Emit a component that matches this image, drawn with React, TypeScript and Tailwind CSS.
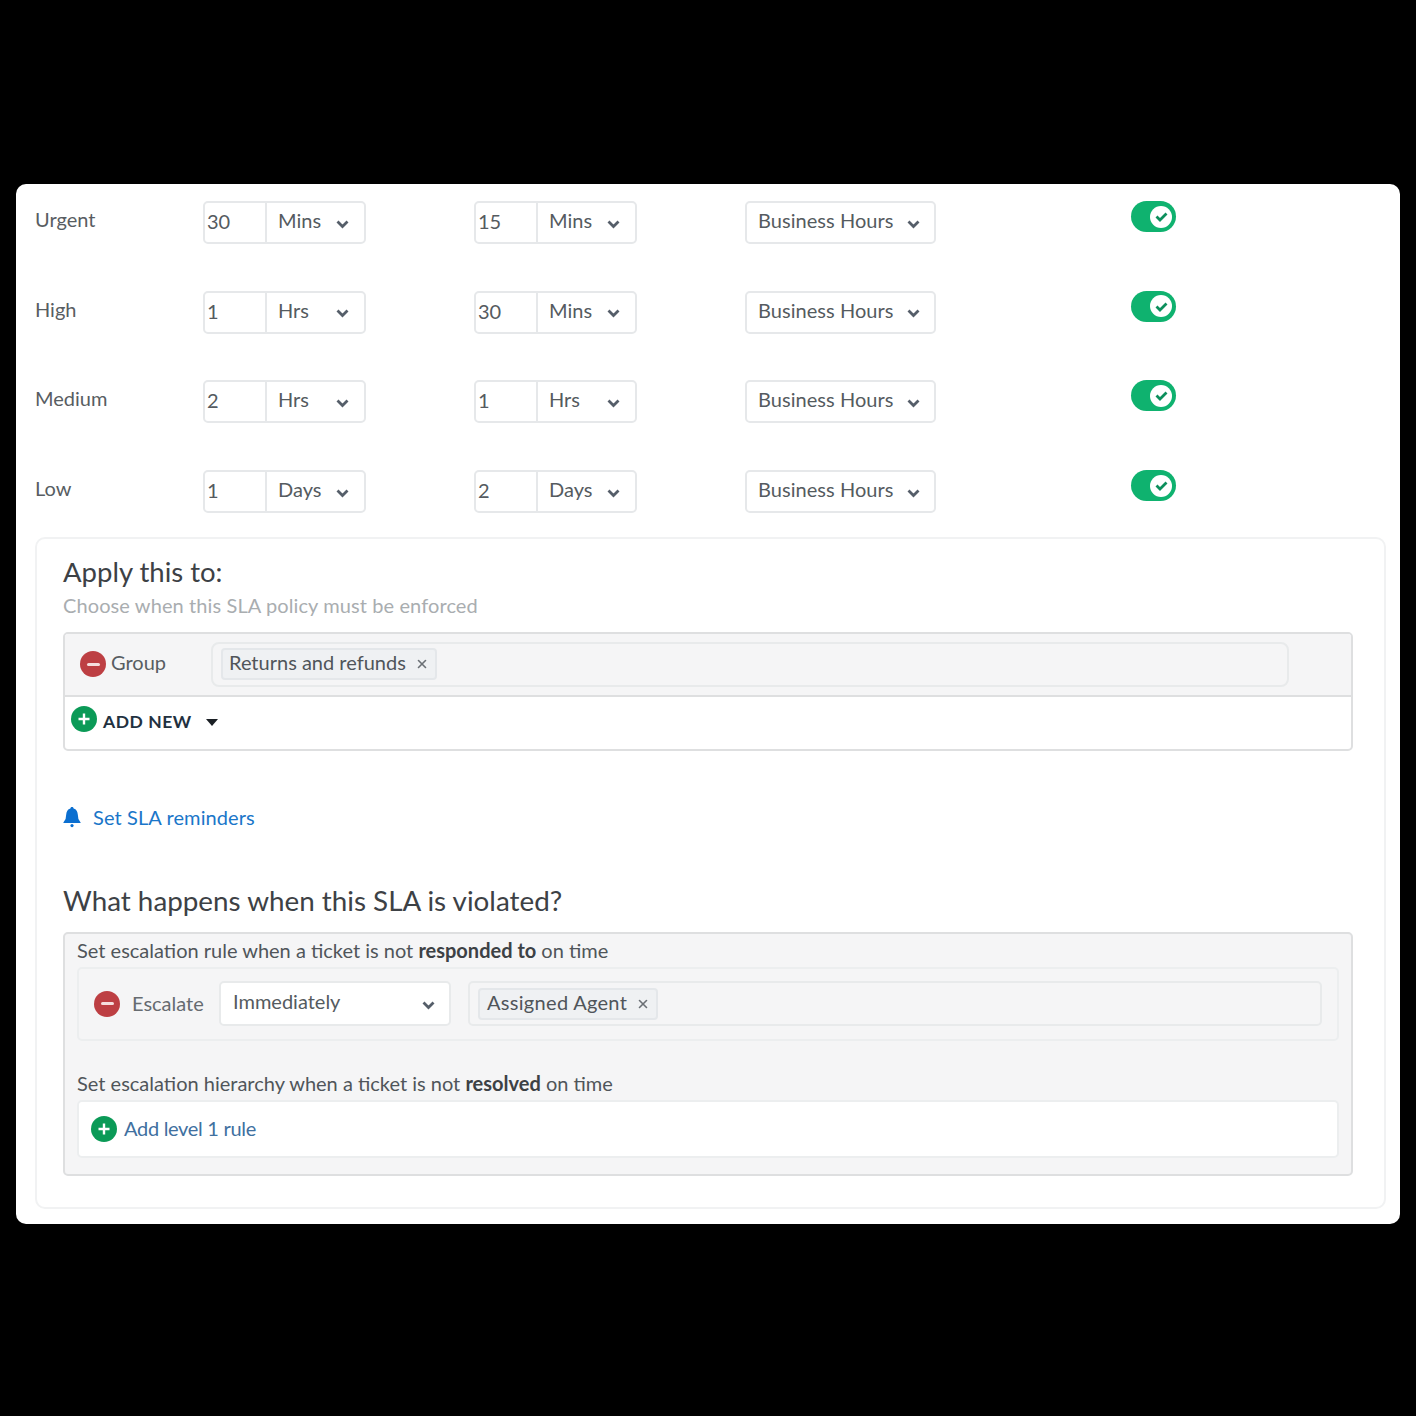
import { X } from 'lucide-react'

const rows = [
  { label: 'Urgent', a: '30', aUnit: 'Mins', b: '15', bUnit: 'Mins' },
  { label: 'High', a: '1', aUnit: 'Hrs', b: '30', bUnit: 'Mins' },
  { label: 'Medium', a: '2', aUnit: 'Hrs', b: '1', bUnit: 'Hrs' },
  { label: 'Low', a: '1', aUnit: 'Days', b: '2', bUnit: 'Days' },
]

function Chevron({ className }: { className?: string }) {
  return (
    <svg width="13" height="10" viewBox="0 0 13 10" className={className} fill="none">
      <path d="M1.5 2.5 L6.5 7.5 L11.5 2.5" stroke="#555e69" strokeWidth="2.8" />
    </svg>
  )
}

function TimeInput({ value, unit }: { value: string; unit: string }) {
  return (
    <div className="flex h-[43px] w-[162.5px] rounded-[5px] border-2 border-[#e6e8ea] bg-white text-[#555b60]">
      <div className="flex w-[62px] items-center border-r-2 border-[#e6e8ea] pb-[3px] pl-[2px]">{value}</div>
      <div className="flex flex-1 items-center justify-between pl-[11px] pr-[15px]">
        <span className="-mt-[5px]">{unit}</span>
        <Chevron className="mt-0.5" />
      </div>
    </div>
  )
}

function Toggle() {
  return (
    <div className="flex h-[31px] w-[45px] items-center justify-end rounded-full bg-[#0fb26f] pr-[4px]">
      <div className="flex h-[22px] w-[22px] items-center justify-center rounded-full bg-white">
        <svg width="13" height="11" viewBox="0 0 13 11" fill="none">
          <path d="M1.5 5.5 L5 9 L11.5 2.5" stroke="#0c8f5c" strokeWidth="2.8" />
        </svg>
      </div>
    </div>
  )
}

function Minus() {
  return (
    <div className="flex h-[26px] w-[26px] shrink-0 items-center justify-center rounded-full bg-[#bd3f43]">
      <div className="h-[3px] w-[13px] rounded-sm bg-[#f5dede]" />
    </div>
  )
}

function Plus() {
  return (
    <div className="flex h-[26px] w-[26px] shrink-0 items-center justify-center rounded-full bg-[#0b9a57]">
      <svg width="14" height="14" viewBox="0 0 14 14" fill="none">
        <path d="M7 1.5 V12.5 M1.5 7 H12.5" stroke="#ffffff" strokeWidth="2.4" />
      </svg>
    </div>
  )
}

function Tag({ text, wide }: { text: string; wide?: boolean }) {
  return (
    <div className="flex h-8 items-center gap-[9px] rounded border-2 border-[#e4e7ea] bg-[#eff1f3] pl-[6px] pr-[6px] text-[#50555a]">
      <span className={wide ? '-mt-[3px] pl-px tracking-[0.3px]' : '-mt-[4px]'}>{text}</span>
      <X size={14} strokeWidth={2.8} className="text-[#6b7075]" />
    </div>
  )
}

export default function App() {
  return (
    <div className="min-h-[1416px] bg-black px-4 pt-[184px] font-['Lato','Open_Sans',sans-serif] text-[20px] leading-6">
      <div className="h-[1040px] rounded-[10px] bg-white pl-[19px] pr-[14px] pt-[17px]">
        <div className="flex flex-col gap-[46.7px]">
          {rows.map((row) => (
            <div key={row.label} className="flex h-[43px] items-start">
              <div className="w-[168px] pt-[6px] text-[#585d62]">{row.label}</div>
              <TimeInput value={row.a} unit={row.aUnit} />
              <div className="ml-[108.5px]">
                <TimeInput value={row.b} unit={row.bUnit} />
              </div>
              <div className="ml-[108.5px] flex h-[43px] w-[191px] items-center justify-between rounded-[5px] border-2 border-[#e6e8ea] pl-[11px] pr-[14px] text-[#555b60]">
                <span className="-mt-[5px] tracking-[0.05px]">Business Hours</span>
                <Chevron className="mt-0.5" />
              </div>
              <div className="ml-[195px]">
                <Toggle />
              </div>
            </div>
          ))}
        </div>

        <div className="mt-[23.9px] h-[672px] rounded-[10px] border-2 border-[#f1f2f3] pl-[26px] pr-[31px] pt-[15px]">
          <h2 className="text-[27.5px] leading-9 text-[#3d4145]">Apply this to:</h2>
          <p className="mt-[3px] leading-6 tracking-[0.1px] text-[#a9adb0]">Choose when this SLA policy must be enforced</p>

          <div className="mt-[15px] h-[119px] overflow-hidden rounded-[5px] border-2 border-[#dedfe0]">
            <div className="flex h-[63px] items-center border-b-2 border-[#dedfe0] bg-[#f5f5f6] pl-[15px]">
              <Minus />
              <span className="-mt-[5px] ml-[5px] w-[100px] text-[#585d62]">Group</span>
              <div className="flex h-[45px] w-[1078px] items-center rounded-lg border-2 border-[#e8eaeb] pl-2">
                <Tag text="Returns and refunds" />
              </div>
            </div>
            <div className="flex items-center pl-[6px] pt-[7px]">
              <Plus />
              <span className="ml-[6px] mt-1.5 text-[17.5px] font-bold tracking-[0.55px] text-[#22313f]">ADD NEW</span>
              <svg width="12" height="7" viewBox="0 0 12 7" className="ml-[14px] mt-2">
                <path d="M0 0 H12 L6 7 Z" fill="#1a1f24" />
              </svg>
            </div>
          </div>

          <div className="mt-[55px] flex items-center">
            <svg width="18" height="22" viewBox="0 0 18 22" fill="#0b6fd0">
              <path d="M9 1 C10 1 10.6 1.6 10.6 2.6 C13.4 3.4 14.6 5.6 14.8 8.6 L15.4 13 L17.6 16.4 V17 H0.4 V16.4 L2.6 13 L3.2 8.6 C3.4 5.6 4.6 3.4 7.4 2.6 C7.4 1.6 8 1 9 1 Z" />
              <circle cx="9" cy="19.6" r="1.6" />
            </svg>
            <a className="-mt-px ml-[12px] tracking-[0.1px] text-[#1a76c9]">Set SLA reminders</a>
          </div>

          <h2 className="mt-[54px] text-[27.8px] leading-9 text-[#3d4145]">What happens when this SLA is violated?</h2>

          <div className="mt-[13px] h-[244px] rounded-[5px] border-2 border-[#dedfe0] bg-[#f5f5f6] px-[12px] pt-1">
            <p className="text-[#50555a]">
              Set escalation rule when a ticket is not <b className="text-[#3d4145]">responded to</b> on time
            </p>
            <div className="mt-[5px] flex h-[74px] items-center rounded-[5px] border-2 border-[#eceeef] pl-[15px]">
              <Minus />
              <span className="-mt-[2px] ml-[12px] w-[87px] text-[#666b70]">Escalate</span>
              <div className="flex h-[45px] w-[232px] items-center justify-between rounded-[5px] border-2 border-[#e8eaeb] bg-white pl-3 pr-[14px] text-[#555b60]">
                <span className="-mt-[6px]">Immediately</span>
                <Chevron className="mt-0.5" />
              </div>
              <div className="ml-[17px] flex h-[45px] w-[854px] items-center rounded-[5px] border-2 border-[#e8eaeb] pl-2">
                <Tag text="Assigned Agent" wide />
              </div>
            </div>
            <p className="mt-[30px] text-[#50555a]">
              Set escalation hierarchy when a ticket is not <b className="text-[#3d4145]">resolved</b> on time
            </p>
            <div className="mt-[5px] flex h-[58px] items-center rounded-[5px] border-2 border-[#eceeef] bg-white pl-[12px]">
              <Plus />
              <span className="-mt-px ml-[7px] tracking-[-0.3px] text-[#40709f]">Add level 1 rule</span>
            </div>
          </div>
        </div>
      </div>
    </div>
  )
}
